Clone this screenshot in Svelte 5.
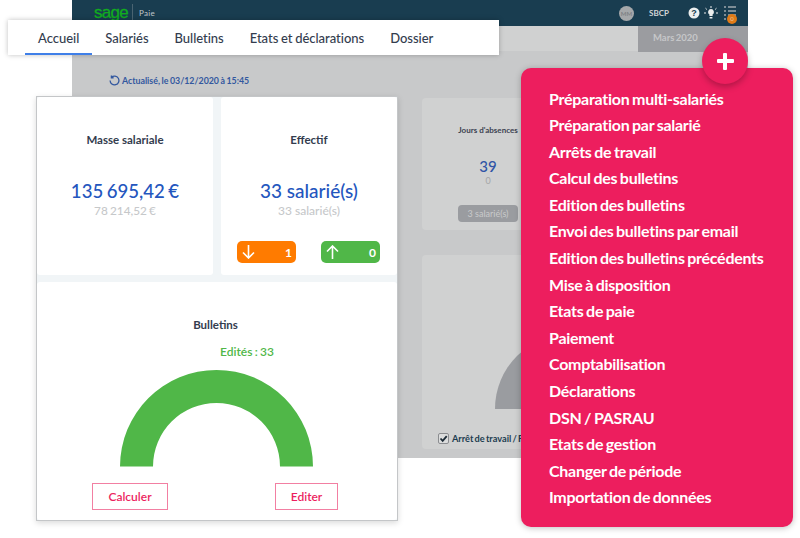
<script>
  const tabs = ['Accueil', 'Salariés', 'Bulletins', 'Etats et déclarations', 'Dossier'];
  const items = ['Préparation multi-salariés','Préparation par salarié','Arrêts de travail','Calcul des bulletins','Edition des bulletins','Envoi des bulletins par email','Edition des bulletins précédents','Mise à disposition','Etats de paie','Paiement','Comptabilisation','Déclarations','DSN / PASRAU','Etats de gestion','Changer de période','Importation de données'];
</script>

<div class="stage">
  <section class="app">
    <header class="top">
      <span class="logo">sage</span>
      <span class="product">Paie</span>
      <span class="avatar">MM</span>
      <span class="company">SBCP</span>
      <svg class="ico" width="12" height="12" viewBox="0 0 12 12"><circle cx="6" cy="6" r="5.5" fill="#eceeee"/><text x="6" y="9" text-anchor="middle" class="q">?</text></svg>
      <svg class="ico bulb" width="14" height="14" viewBox="0 0 14 14"><path d="M7 3a3 3 0 0 0-1.6 5.5V10h3.2V8.5A3 3 0 0 0 7 3zM5.6 11h2.8v1.4H5.6z" fill="#eceeee"/><path d="M7 0v2M1.500 2.200l1.400 1.300M12.500 2.200l-1.400 1.300M0 7h2M12 7h2" stroke="#eceeee" stroke-width="1"/></svg>
      <span class="tasks">
        <svg width="12" height="14" viewBox="0 0 12 14"><path d="M0 1h2M4 1h8M0 5h2M4 5h8M0 9h2M4 9h8M0 13h2M4 13h5" stroke="#9fa8ad" stroke-width="1.400"/></svg>
        <span class="dot">0</span>
      </span>
    </header>
    <div class="subbar"><span class="period">Mars 2020</span></div>
    <div class="updated">
      <svg width="11" height="11" viewBox="0 0 12 12" fill="none" stroke="#33589f" stroke-width="1.400"><path d="M2.600 2.600A4.800 4.800 0 1 1 1.200 6"/><path d="M2.600 .6v2.400H5" /></svg>
      Actualisé, le 03/12/2020 à 15:45
    </div>
    <div class="bg-col">
      <div class="bg-card absences">
        <div class="bg-title">Jours d'absences</div>
        <div class="bg-num">39</div>
        <div class="bg-zero">0</div>
        <div class="bg-btn">3 salarié(s)</div>
      </div>
      <div class="bg-card chart">
        <svg class="bg-gauge" width="75" height="75" viewBox="0 0 75 75"><path d="M0 75A75 75 0 0 1 75 0V75z" fill="#9a9ca0"/></svg>
        <div class="check">
          <svg class="box" width="11" height="11" viewBox="0 0 11 11"><rect x=".5" y=".5" width="10" height="10" rx="1.500" fill="#dcdddd" stroke="#8b8d90"/><path d="M2.500 5.500l2.200 2.300 4-4.600" fill="none" stroke="#1d2b36" stroke-width="1.800"/></svg>
          Arrêt de travail / Paie
        </div>
      </div>
    </div>
  </section>

  <nav class="nav">
    {#each tabs as t, i}
      <span class="tab" class:active={i === 0}>{t}</span>
    {/each}
  </nav>

  <section class="panel">
    <div class="row">
      <article class="card">
        <h3>Masse salariale</h3>
        <div class="big amount">135 695,42 €</div>
        <div class="old amount-old">78 214,52 €</div>
      </article>
      <article class="card">
        <h3>Effectif</h3>
        <div class="big">33 salarié(s)</div>
        <div class="old">33 salarié(s)</div>
        <div class="pills">
          <span class="pill orange">
            <svg width="13" height="14" viewBox="0 0 13 14" fill="none" stroke="#fff" stroke-width="1.600"><path d="M6.500 0v13M1 7.500l5.500 5.500L12 7.500"/></svg>1
          </span>
          <span class="pill green">
            <svg width="13" height="14" viewBox="0 0 13 14" fill="none" stroke="#fff" stroke-width="1.600"><path d="M6.500 14V1M1 6.500L6.500 1 12 6.500"/></svg>0
          </span>
        </div>
      </article>
    </div>
    <article class="card wide">
      <h3>Bulletins</h3>
      <div class="edited">Edités : 33</div>
      <svg class="gauge" width="193" height="97" viewBox="0 0 193 97"><path d="M0 96.500A96.500 96.500 0 0 1 193 96.500H160A63.500 63.500 0 0 0 33 96.500z" fill="#50b748"/></svg>
      <div class="actions">
        <span class="action calc">Calculer</span>
        <span class="action edit">Editer</span>
      </div>
    </article>
  </section>

  <aside class="menu">
    <ul>
      {#each items as it}<li>{it}</li>{/each}
    </ul>
  </aside>
  <div class="fab"><span class="plus"></span></div>
</div>

<style>
  :global(body) { margin: 0; background: #fff; }
  .stage { position: relative; width: 800px; height: 538px; overflow: hidden; font-family: Lato, sans-serif; color: #333c4e; }

  .app { position: absolute; left: 72px; top: 0; width: 676px; height: 458px; background: #c8c9ca; }
  .top { height: 26px; background: #193d50; display: flex; align-items: center; color: #d4d6d8; }
  .logo { margin-left: 22px; font: 400 17px/18px "Liberation Sans", sans-serif; letter-spacing: -.7px; color: #11ad1f; -webkit-text-stroke: .3px #11ad1f; width: 33px; border-right: 1px solid #4a6472; padding-right: 5px; height: 18px; }
  .product { font-size: 8px; margin-left: 6px; color: #c1c6ca; letter-spacing: .3px; }
  .avatar { margin-left: auto; margin-right: 0; width: 15px; height: 15px; border-radius: 50%; background: #a5a8aa; color: #7e8184; font-size: 6px; display: flex; align-items: center; justify-content: center; font-weight: 700; }
  .company { font-size: 8px; font-weight: 700; margin-left: 15px; width: 20px; }
  .ico { margin-left: 19px; }
  .bulb { margin-left: 4px; }
  .q { font: 700 9px "Liberation Sans", sans-serif; fill: #193d50; }
  .tasks { position: relative; margin-left: 6px; margin-right: 12px; height: 14px; display: block; width: 12px; }
  .tasks svg { display: block; }
  .dot { position: absolute; left: 3px; top: 8px; width: 10px; height: 10px; border-radius: 50%; background: #e07b17; color: #e9c9a0; font-size: 6px; text-align: center; line-height: 10px; }
  .subbar { height: 25px; background: #d0d1d1; display: flex; justify-content: flex-end; }
  .period { width: 110px; height: 26px; background: #9b9ca0; color: #c6c7c9; font-size: 9.500px; font-weight: 700; word-spacing: -1px; box-sizing: border-box; padding: 6px 0 0 15px; }
  .updated { display: flex; align-items: center; gap: 2px; margin: 24px 0 0 37px; font-size: 8.800px; font-weight: 700; word-spacing: -.6px; color: #33589f; line-height: 11px; }

  .bg-col { position: absolute; left: 350px; top: 98px; width: 132px; display: flex; flex-direction: column; gap: 25px; }
  .bg-card { background: #d0d1d1; border-radius: 4px; box-sizing: border-box; text-align: center; }
  .absences { height: 132px; padding-top: 26px; }
  .bg-title { font-size: 8px; font-weight: 700; color: #3b4250; line-height: 12px; white-space: nowrap; }
  .bg-num { font-size: 15px; font-weight: 500; color: #2f54a6; margin-top: 21px; line-height: 18px; }
  .bg-zero { font-size: 9px; color: #a4a6a8; line-height: 10px; margin-top: 1px; }
  .bg-btn { width: 60px; margin: 19px auto 0 36px; height: 17px; line-height: 17px; font-size: 9px; background: #9a9ca0; color: #c9cacb; border-radius: 4px; }
  .chart { position: relative; height: 194px; }
  .bg-gauge { position: absolute; left: 73px; top: 79px; }
  .check { position: absolute; left: 16px; bottom: 5px; display: flex; align-items: center; gap: 3px; font-size: 9.200px; font-weight: 700; word-spacing: -1px; color: #1d3d50; white-space: nowrap; }
  .box { display: block; }

  .nav { position: absolute; left: 8px; top: 20px; width: 491px; height: 35px; box-sizing: border-box; background: #fff; box-shadow: 0 0 5px rgba(0,0,0,.25); display: flex; padding-left: 17px; }
  .tab { padding: 0 13px; font-size: 13px; font-weight: 500; line-height: 36px; color: #333c4e; white-space: nowrap; letter-spacing: -.03px; word-spacing: -.5px; }
  .tab.active { box-shadow: inset 0 -2px 0 #3f7fe8; }

  .panel { position: absolute; left: 36px; top: 96px; width: 362px; height: 425px; box-sizing: border-box; border: 1px solid #c4c6c8; background: #f1f5f7; box-shadow: 0 2px 6px rgba(0,0,0,.15); display: flex; flex-direction: column; gap: 7px; }
  .row { display: flex; gap: 8px; height: 178px; }
  .card { flex: 1; background: #fff; border-radius: 3px; display: flex; flex-direction: column; align-items: center; position: relative; }
  h3 { margin: 35px 0 0; font-size: 11.500px; line-height: 16px; font-weight: 700; color: #333c4e; white-space: nowrap; }
  .big { margin-top: 31px; font-size: 19px; line-height: 24px; font-weight: 500; color: #2456be; white-space: nowrap; }
  .old { font-size: 12px; line-height: 14px; margin-top: 1px; font-weight: 500; color: #c6c8ca; white-space: nowrap; }
  .amount { font-size: 18.600px; word-spacing: -1.200px; }
  .amount-old { font-size: 11.800px; word-spacing: -.8px; }
  .pills { position: absolute; left: 16px; top: 144px; width: 143px; display: flex; justify-content: space-between; }
  .pill { width: 59px; height: 22px; border-radius: 5px; box-sizing: border-box; padding: 0 4px 0 5px; display: flex; align-items: center; justify-content: space-between; color: #fff; font-size: 12px; font-weight: 700; }
  .orange { background: #ff7b00; }
  .green { background: #50b748; }
  .wide { height: 238px; flex: none; }
  .wide h3 { margin: 35px 3px 0 0; font-size: 11.500px; }
  .edited { align-self: flex-start; margin: 11px 0 0 183px; font-size: 12px; line-height: 16px; font-weight: 600; color: #50b748; white-space: nowrap; word-spacing: -.7px; }
  .gauge { display: block; margin-top: 10px; margin-left: -1px; }
  .actions { align-self: stretch; display: flex; justify-content: space-between; margin: 16px 59px 0 55px; }
  .action { height: 27px; box-sizing: border-box; border: 1px solid #f27fa2; color: #ec1f5f; font-size: 12px; font-weight: 600; display: flex; align-items: center; justify-content: center; }
  .calc { width: 76px; }
  .edit { width: 63px; }

  .menu { position: absolute; left: 521px; top: 68px; width: 272px; height: 459px; border-radius: 10px; background: #ed1e5e; box-shadow: 0 1px 6px rgba(0,0,0,.25); box-sizing: border-box; padding: 17.500px 0 0 28px; }
  ul { list-style: none; margin: 0; padding: 0; }
  li { height: 26.600px; line-height: 26.600px; color: #fff; font-size: 16px; font-weight: 700; letter-spacing: -.27px; word-spacing: -1px; white-space: nowrap; }
  .fab { position: absolute; left: 702px; top: 38px; width: 46px; height: 46px; border-radius: 50%; background: #ed1e5e; box-shadow: 0 3px 6px rgba(0,0,0,.25); display: flex; align-items: center; justify-content: center; }
  .plus { position: relative; width: 17px; height: 4px; background: #fff; border-radius: 1px; }
  .plus::after { content: ""; position: absolute; left: 6.500px; top: -6.500px; width: 4px; height: 17px; background: #fff; border-radius: 1px; }
</style>
